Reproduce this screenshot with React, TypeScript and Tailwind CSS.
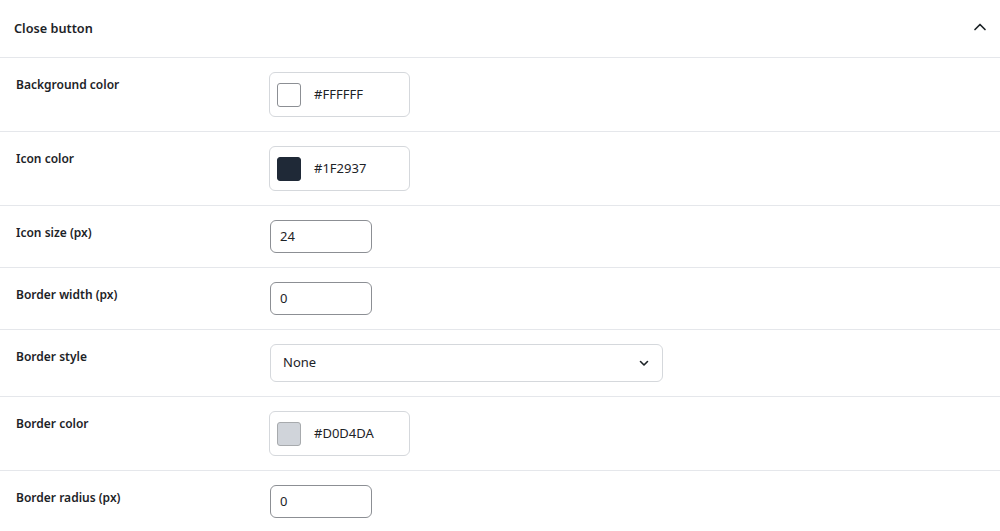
import React from "react";

type Row =
  | { label: string; kind: "color"; value: string; swatch: string; border: string }
  | { label: string; kind: "number"; value: string }
  | { label: string; kind: "select"; value: string };

const rows: Row[] = [
  { label: "Background color", kind: "color", value: "#FFFFFF", swatch: "bg-white", border: "border-[#8c8f94]" },
  { label: "Icon color", kind: "color", value: "#1F2937", swatch: "bg-[#1f2937]", border: "border-[#1f2937]" },
  { label: "Icon size (px)", kind: "number", value: "24" },
  { label: "Border width (px)", kind: "number", value: "0" },
  { label: "Border style", kind: "select", value: "None" },
  { label: "Border color", kind: "color", value: "#D0D4DA", swatch: "bg-[#d0d4da]", border: "border-[#a7aaad]" },
  { label: "Border radius (px)", kind: "number", value: "0" },
];

function Control({ row }: { row: Row }) {
  if (row.kind === "color") {
    return (
      <div className="-ml-px flex h-[45px] w-[141px] items-center gap-[13px] rounded-md border border-[#d5d8dc] bg-white pl-[7px]">
        <span className={`h-[24px] w-[24px] rounded-[3px] border ${row.swatch} ${row.border}`} />
        <span className="text-[13px] text-[#1d2327]">{row.value}</span>
      </div>
    );
  }
  if (row.kind === "number") {
    return (
      <div className="flex h-[33px] w-[102px] items-center rounded-md border border-[#8c8f94] bg-white pl-[9px] text-[13px] text-[#1d2327]">
        {row.value}
      </div>
    );
  }
  return (
    <div className="flex h-[38px] w-[393px] items-center justify-between rounded-md border border-[#d5d8dc] bg-white pl-[12px] pr-[12px] text-[13px] text-[#1d2327]">
      <span>{row.value}</span>
      <svg width="12" height="12" viewBox="0 0 12 12" fill="none">
        <path d="M2.5 4.5L6 8l3.5-3.5" stroke="#1d2327" strokeWidth="1.6" strokeLinecap="round" strokeLinejoin="round" />
      </svg>
    </div>
  );
}

export default function App() {
  return (
    <div className="min-h-[531px] w-full bg-white font-['Noto_Sans',sans-serif] text-[#1d2327]">
      <div className="flex h-[57px] items-center justify-between pl-[14px] pr-[12px]">
        <span className="text-[12.7px] font-semibold">Close button</span>
        <svg width="16" height="16" viewBox="0 0 16 16" fill="none" className="-mt-[4px]">
          <path d="M3 10.5L8 5.5l5 5" stroke="#1d2327" strokeWidth="1.7" strokeLinecap="round" strokeLinejoin="round" />
        </svg>
      </div>
      {rows.map((row) => (
        <div
          key={row.label}
          className="grid grid-cols-[254px_1fr] border-t border-[#e5e7eb] pl-[16px] py-[14px]"
        >
          <div className="pt-[4px] text-[12px] font-semibold leading-[18px]">{row.label}</div>
          <div>
            <Control row={row} />
          </div>
        </div>
      ))}
    </div>
  );
}
